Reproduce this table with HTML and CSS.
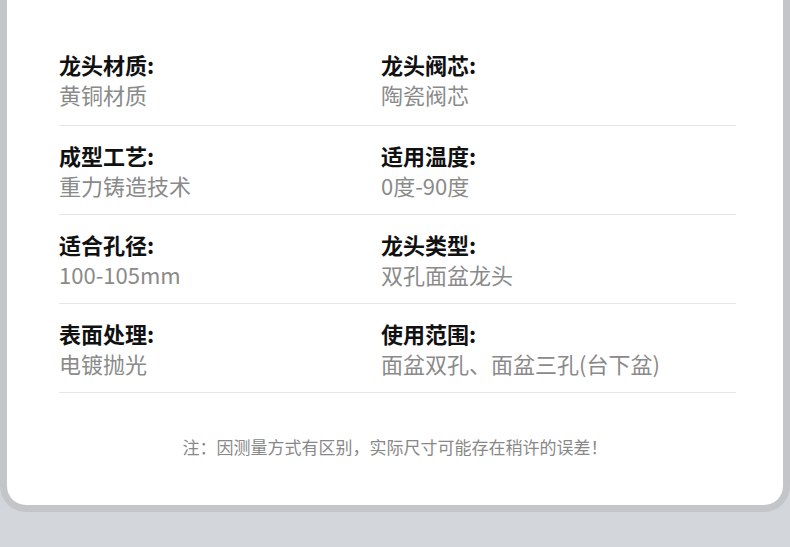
FILE: index.html
```html
<!DOCTYPE html>
<html lang="zh-CN">
<head>
<meta charset="utf-8">
<link rel="stylesheet" href="styles.css">
</head>
<body>
<div class="frame">
  <div class="card">
    <div class="specs">
      <div class="row">
        <div class="item"><div class="label">龙头材质:</div><div class="value">黄铜材质</div></div>
        <div class="item"><div class="label">龙头阀芯:</div><div class="value">陶瓷阀芯</div></div>
      </div>
      <div class="row">
        <div class="item"><div class="label">成型工艺:</div><div class="value">重力铸造技术</div></div>
        <div class="item"><div class="label">适用温度:</div><div class="value">0度-90度</div></div>
      </div>
      <div class="row">
        <div class="item"><div class="label">适合孔径:</div><div class="value">100-105mm</div></div>
        <div class="item"><div class="label">龙头类型:</div><div class="value">双孔面盆龙头</div></div>
      </div>
      <div class="row">
        <div class="item"><div class="label">表面处理:</div><div class="value">电镀抛光</div></div>
        <div class="item"><div class="label">使用范围:</div><div class="value">面盆双孔、面盆三孔(台下盆)</div></div>
      </div>
    </div>
    <p class="note">注：因测量方式有区别，实际尺寸可能存在稍许的误差！</p>
  </div>
</div>
</body>
</html>
```
FILE: styles.css
```css
html, body {
  margin: 0;
  padding: 0;
}
body {
  width: 790px;
  height: 547px;
  overflow: hidden;
  background: linear-gradient(180deg, #cdd0d5 0%, #d3d6db 100%);
  font-family: "Noto Sans CJK SC", "Noto Sans", sans-serif;
}
.frame {
  background: #c3c5c9;
  padding: 0 7px 7px;
  border-radius: 0 0 26px 26px;
}
.card {
  background: #ffffff;
  height: 505px;
  box-sizing: border-box;
  border-radius: 0 0 19px 19px;
  padding-top: 49px;
}
.specs {
  margin: 0 47px 0 52px;
}
.row {
  display: grid;
  grid-template-columns: 322px 1fr;
  padding: 14px 0 14px;
  border-bottom: 1px solid #e6e6e6;
}
.row:first-child {
  padding-top: 0;
  padding-bottom: 16px;
}
.label {
  font-size: 22px;
  line-height: 30px;
  font-weight: 700;
  color: #111111;
}
.value {
  font-size: 22px;
  line-height: 30px;
  color: #8a8a8a;
}
.note {
  margin: 42px 0 0;
  text-align: center;
  font-size: 17px;
  line-height: 24px;
  color: #888888;
}
```
